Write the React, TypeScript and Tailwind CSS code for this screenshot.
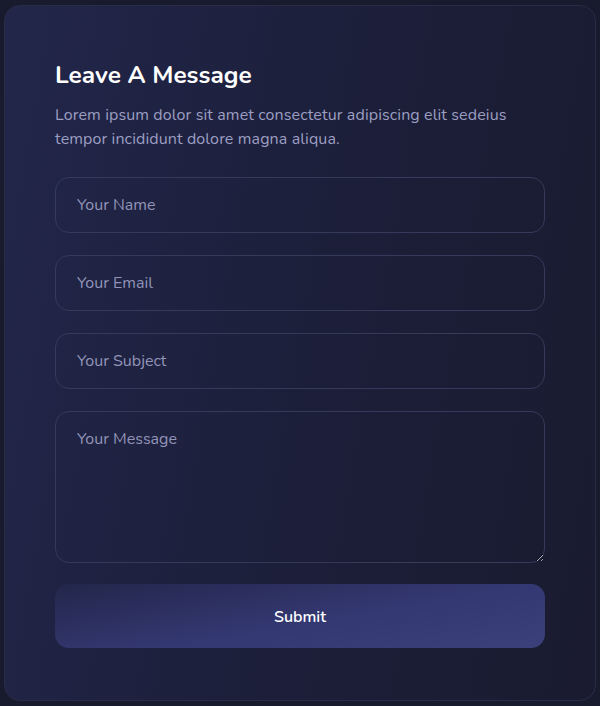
export default function App() {
  const fields = ["Your Name", "Your Email", "Your Subject"];

  return (
    <div className="min-h-[706px] bg-[#181a2d] px-1 pt-[5px] pb-[6px] font-['Nunito','Noto_Sans',sans-serif]">
      <form className="rounded-2xl border border-[#2a2c47] bg-[linear-gradient(100deg,#22264a_0%,#1c1f3a_50%,#1a1b30_100%)] px-[50px] pt-[53px] pb-[52px]">
        <h2 className="text-[24.4px] leading-8 font-bold text-white">Leave A Message</h2>

        <p className="mt-[12px] text-[16px] leading-6 tracking-[0.007em] text-[#9c9ec2]">
          Lorem ipsum dolor sit amet consectetur adipiscing elit sedeius tempor incididunt dolore magna aliqua.
        </p>

        <div className="mt-[26px] flex flex-col gap-[22px]">
          {fields.map((f) => (
            <input
              key={f}
              placeholder={f}
              className="h-[56px] w-full rounded-[14px] border border-[#363a5a] bg-transparent px-[21px] text-[16px] text-white outline-none placeholder:text-[#9294b8]"
            />
          ))}

          <textarea
            placeholder="Your Message"
            className="h-[152px] w-full resize-y rounded-[14px] border border-[#363a5a] bg-transparent px-[21px] pt-[15px] text-[16px] text-white outline-none placeholder:text-[#9294b8]"
          />
        </div>

        <button
          type="button"
          className="mt-[21px] h-[64px] w-full rounded-[14px] bg-[linear-gradient(170deg,#23264a_0%,#343872_55%,#3b3f7a_100%)] pt-[2px] text-[16px] font-semibold text-white"
        >
          Submit
        </button>
      </form>
    </div>
  );
}
